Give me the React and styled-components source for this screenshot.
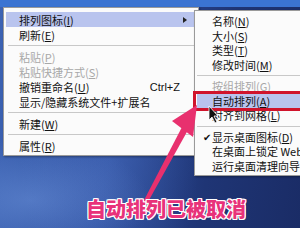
import React from "react";
import styled, { createGlobalStyle } from "styled-components";

const GlobalStyle = createGlobalStyle`
  html, body {
    margin: 0;
    padding: 0;
    overflow: hidden;
  }
  body {
    font-family: "Noto Sans CJK SC", "DejaVu Sans", sans-serif;
  }
`;

const Desktop = styled.div`
  position: relative;
  width: 300px;
  height: 228px;
  overflow: hidden;
  background:
    linear-gradient(180deg, #3b74d2 0px, #3b74d2 7px, transparent 7px),
    radial-gradient(ellipse 120px 60px at 30px 200px, rgba(120, 160, 230, 0.45), transparent),
    radial-gradient(ellipse 90px 160px at 110px 150px, rgba(90, 130, 210, 0.35), transparent),
    linear-gradient(100deg, #3d64b4 0%, #2c4c9c 40%, #1f3575 70%, #1a2c66 100%);
`;

const Menu = styled.div`
  position: absolute;
  left: ${(p) => p.$left}px;
  top: ${(p) => p.$top}px;
  width: ${(p) => p.$width}px;
  padding: ${(p) => p.$pad}px 2px 2px 2px;
  display: flex;
  flex-direction: column;
  background: #fbfbfb;
  border: 1px solid #9a9a9a;
  box-sizing: border-box;
  font-size: 11px;
  color: #111;
  box-shadow: 1px 1px 2px rgba(0, 0, 0, 0.35);
`;

const Row = styled.div`
  display: flex;
  align-items: center;
  height: ${(p) => p.$h}px;
  padding-left: ${(p) => p.$indent}px;
  padding-right: 8px;
  background: ${(p) => (p.$active ? "#b9c4ee" : "transparent")};
  color: ${(p) => (p.$disabled ? "#a8a8a8" : "#111")};
  white-space: nowrap;
  position: relative;
`;

const Label = styled.span`
  flex: 1;
`;

const Shortcut = styled.span`
  font-family: "Liberation Sans", "DejaVu Sans", sans-serif;
  font-size: 11px;
  margin-right: 8px;
`;

const Arrow = styled.span`
  width: 0;
  height: 0;
  border-top: 3.5px solid transparent;
  border-bottom: 3.5px solid transparent;
  border-left: 4px solid #222;
  margin-right: 1px;
`;

const Check = styled.span`
  position: absolute;
  left: 6px;
  font-size: 10px;
`;

const Sep = styled.div`
  height: ${(p) => p.$h}px;
  display: flex;
  align-items: center;
  margin-left: ${(p) => p.$indent}px;
  &::after {
    content: "";
    flex: 1;
    border-top: 1px solid #c8c8c8;
  }
`;

const U = styled.span`
  text-decoration: underline;
`;

const RedBox = styled.div`
  position: absolute;
  left: 193px;
  top: 91px;
  width: 130px;
  height: 20px;
  border: 3px solid #d0142c;
  box-sizing: border-box;
`;

const Overlay = styled.svg`
  position: absolute;
  left: 0;
  top: 0;
`;

const Caption = styled.div`
  position: absolute;
  left: 86px;
  top: 197px;
  font-family: "Noto Sans CJK SC", sans-serif;
  font-weight: 900;
  font-size: 20px;
  line-height: 24px;
  color: #e8327a;
  text-shadow:
    1px 0 0 #fff, -1px 0 0 #fff, 0 1px 0 #fff, 0 -1px 0 #fff,
    1px 1px 0 #fff, -1px -1px 0 #fff, 1px -1px 0 #fff, -1px 1px 0 #fff;
  white-space: nowrap;
`;

const mk = (t, key) => (
  <>
    {t}(<U>{key}</U>)
  </>
);

const mainItems = [
  { label: mk("排列图标", "I"), active: true, arrow: true },
  { label: mk("刷新", "E") },
  { sep: true },
  { label: mk("粘贴", "P"), disabled: true },
  { label: mk("粘贴快捷方式", "S"), disabled: true },
  { label: mk("撤销重命名", "U"), shortcut: "Ctrl+Z" },
  { label: "显示/隐藏系统文件+扩展名" },
  { sep: true },
  { label: mk("新建", "W") },
  { sep: true },
  { label: mk("属性", "R") },
];

const subItems = [
  { label: mk("名称", "N") },
  { label: mk("大小", "S") },
  { label: mk("类型", "T") },
  { label: mk("修改时间", "M") },
  { sep: true },
  { label: "按组排列(G)", disabled: true },
  { label: mk("自动排列", "A"), active: true },
  { label: mk("对齐到网格", "L") },
  { sep: true },
  { label: mk("显示桌面图标", "D"), check: true },
  { label: "在桌面上锁定 Web 项目(I)" },
  { label: mk("运行桌面清理向导", "R") },
];

const MenuList = ({ items, rowH, sepH, indent, sepIndent }) =>
  items.map((it, i) =>
    it.sep ? (
      <Sep key={i} $h={sepH} $indent={sepIndent} />
    ) : (
      <Row
        key={i}
        $h={rowH}
        $indent={indent}
        $active={it.active}
        $disabled={it.disabled}
      >
        {it.check && <Check>✔</Check>}
        <Label>{it.label}</Label>
        {it.shortcut && <Shortcut>{it.shortcut}</Shortcut>}
        {it.arrow && <Arrow />}
      </Row>
    )
  );

export default function App() {
  return (
    <>
      <GlobalStyle />
      <Desktop>
        <Menu $left={3} $top={7} $width={196} $pad={4}>
          <MenuList items={mainItems} rowH={15} sepH={7} indent={13} sepIndent={2} />
        </Menu>
        <Menu $left={194} $top={10} $width={140} $pad={3}>
          <MenuList items={subItems} rowH={14.5} sepH={7} indent={15} sepIndent={0} />
        </Menu>
        <RedBox />
        <Overlay width="300" height="228" viewBox="0 0 300 228">
          <polygon points="140,208 144,209 188,130 182,127" fill="#e8306e" />
          <polygon points="197,105 172,121 193,137" fill="#e8306e" />
          <path
            d="M209 106 L209 120 L212 117 L215 123 L217 122 L214 116 L218 116 Z"
            fill="#111"
            stroke="#fff"
            strokeWidth="0.8"
          />
        </Overlay>
        <Caption>自动排列已被取消</Caption>
      </Desktop>
    </>
  );
}
